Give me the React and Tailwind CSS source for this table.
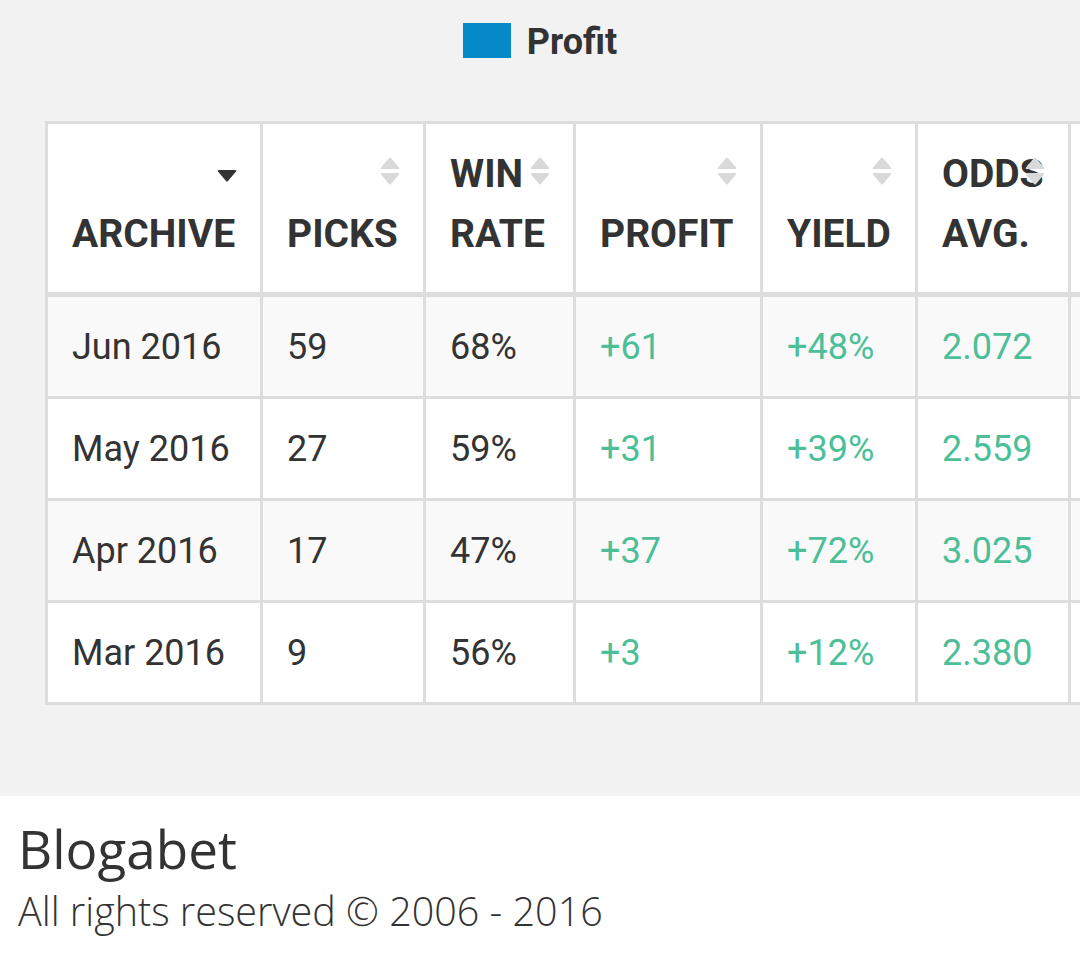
import React from 'react'

const rows = [
  { month: 'Jun 2016', picks: '59', winRate: '68%', profit: '+61', yieldPct: '+48%', odds: '2.072' },
  { month: 'May 2016', picks: '27', winRate: '59%', profit: '+31', yieldPct: '+39%', odds: '2.559' },
  { month: 'Apr 2016', picks: '17', winRate: '47%', profit: '+37', yieldPct: '+72%', odds: '3.025' },
  { month: 'Mar 2016', picks: '9', winRate: '56%', profit: '+3', yieldPct: '+12%', odds: '2.380' },
]

function SortIcon({ active }) {
  if (active) {
    return (
      <svg className="absolute right-[23px] top-[46px] w-[20px] h-[12px]" viewBox="0 0 20 12">
        <path d="M1 1.5 Q0 0 2 0 H18 Q20 0 19 1.5 L11 11 Q10 12 9 11 Z" fill="#333333" />
      </svg>
    )
  }
  return (
    <svg className="absolute right-[23px] top-[33px] w-[20px] h-[28px]" viewBox="0 0 20 28">
      <path d="M1 10.5 L9 1 Q10 0 11 1 L19 10.5 Q20 12 18 12 H2 Q0 12 1 10.5 Z" fill="#d9d9d9" />
      <path d="M1 17.5 Q0 16 2 16 H18 Q20 16 19 17.5 L11 27 Q10 28 9 27 Z" fill="#d9d9d9" />
    </svg>
  )
}

function HeadCell({ children, active, className = '' }) {
  return (
    <th
      className={
        'relative h-[176px] align-bottom text-left font-bold uppercase text-[39px] leading-[60px] text-[#333333] bg-white px-[24px] pb-[28px] border-t-[3px] border-r-[3px] border-b-[5px] border-[#dddddd] ' +
        className
      }
    >
      {children}
      <SortIcon active={active} />
    </th>
  )
}

function Cell({ children, green, first }) {
  return (
    <td
      className={
        'h-[102px] align-middle px-[24px] text-[36px] border-r-[3px] border-b-[3px] border-[#dddddd] ' +
        (first ? 'border-l-[3px] ' : '') +
        (green ? 'text-[#4cbf98]' : 'text-[#333333]')
      }
    >
      {children}
    </td>
  )
}

export default function App() {
  return (
    <div className="w-[1080px] min-h-[971px] bg-white font-['Roboto',sans-serif]">
      <div className="bg-[#f2f2f2] h-[796px]">
        {/* legend */}
        <div className="flex items-start justify-center gap-[16px] pt-[23px]">
          <span className="w-[48px] h-[35px] bg-[#0589c9]" />
          <span className="mt-[2px] text-[36px] font-bold text-[#333333] leading-[35px]">Profit</span>
        </div>

        {/* archive table */}
        <div className="overflow-hidden pl-[45px] pt-[61px]">
          <table className="table-fixed border-separate border-spacing-0 w-[1276px]">
            <thead>
              <tr>
                <HeadCell active className="w-[218px] border-l-[3px]">Archive</HeadCell>
                <HeadCell className="w-[163px]">Picks</HeadCell>
                <HeadCell className="w-[150px]">Win rate</HeadCell>
                <HeadCell className="w-[187px]">Profit</HeadCell>
                <HeadCell className="w-[155px]">Yield</HeadCell>
                <HeadCell className="w-[153px]">Odds avg.</HeadCell>
                <HeadCell className="w-[250px]">&nbsp;</HeadCell>
              </tr>
            </thead>
            <tbody>
              {rows.map((r, i) => (
                <tr key={r.month} className={i % 2 === 0 ? 'bg-[#f9f9f9]' : 'bg-white'}>
                  <Cell first>{r.month}</Cell>
                  <Cell>{r.picks}</Cell>
                  <Cell>{r.winRate}</Cell>
                  <Cell green>{r.profit}</Cell>
                  <Cell green>{r.yieldPct}</Cell>
                  <Cell green>{r.odds}</Cell>
                  <Cell />
                </tr>
              ))}
            </tbody>
          </table>
        </div>
      </div>

      {/* footer */}
      <footer className="px-[18px] pt-[22px] font-['Open_Sans',sans-serif] text-[#333333]">
        <div className="text-[53px] leading-[62px]">Blogabet</div>
        <div className="text-[39.5px] font-light leading-[62px]">All rights reserved © 2006 - 2016</div>
      </footer>
    </div>
  )
}
